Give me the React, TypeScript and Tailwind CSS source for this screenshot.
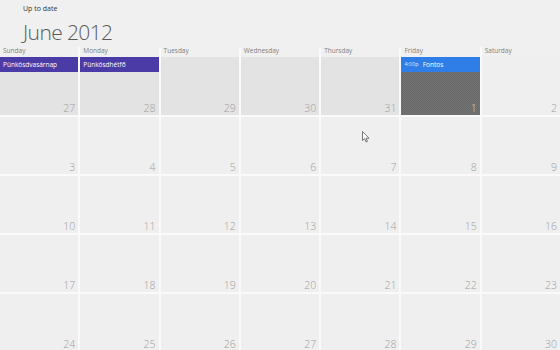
import React from "react";

const days = ["Sunday", "Monday", "Tuesday", "Wednesday", "Thursday", "Friday", "Saturday"];

type Cell = { n: number; prev?: boolean; today?: boolean; event?: { color: string; time?: string; title: string } };

const rows: Cell[][] = [
  [
    { n: 27, prev: true, event: { color: "bg-[#4b3ba6]", title: "Pünkösdvasárnap" } },
    { n: 28, prev: true, event: { color: "bg-[#4b3ba6]", title: "Pünkösdhétfő" } },
    { n: 29, prev: true },
    { n: 30, prev: true },
    { n: 31, prev: true },
    { n: 1, today: true, event: { color: "bg-[#2f7de6]", time: "4:00p", title: "Fontos" } },
    { n: 2 },
  ],
  [3, 4, 5, 6, 7, 8, 9].map((n) => ({ n })),
  [10, 11, 12, 13, 14, 15, 16].map((n) => ({ n })),
  [17, 18, 19, 20, 21, 22, 23].map((n) => ({ n })),
  [24, 25, 26, 27, 28, 29, 30].map((n) => ({ n })),
];

export default function App() {
  return (
    <div
      className="relative w-[560px] h-[350px] overflow-hidden bg-[#f0f0f0]"
      style={{ fontFamily: '"Open Sans", "Noto Sans", sans-serif' }}
    >
      <div className="h-[47px] pl-[23px] pt-[4px]">
        <div className="text-[7px] leading-[9px] text-[#333]">Up to date</div>
        <div className="text-[21px] leading-[24px] mt-[7px] font-light text-[#5a5a5a] tracking-[-0.6px]">
          June 2012
        </div>
      </div>
      <div className="grid grid-cols-7 gap-x-[2px] bg-[#fafafa]">
        {days.map((d) => (
          <div key={d} className="h-[10px] bg-[#f0f0f0] pl-[3px] text-[6.5px] leading-[8px] text-[#808080]">
            {d}
          </div>
        ))}
      </div>
      <div className="grid grid-cols-7 grid-rows-[58px_repeat(4,57px)] gap-[2px] bg-[#fafafa]">
        {rows.flat().map((c, i) => (
          <div
            key={i}
            className={
              "relative flex flex-col " +
              (c.today ? "bg-[#6e6e6e]" : c.prev ? "bg-[#e3e3e3]" : "bg-[#efefef]")
            }
            style={
              c.today
                ? {
                    backgroundImage:
                      "repeating-conic-gradient(#727272 0% 25%, #6a6a6a 0% 50%)",
                    backgroundSize: "2px 2px",
                  }
                : undefined
            }
          >
            {c.event && (
              <div className={"h-[15px] flex items-center px-[3px] text-[6.5px] text-white " + c.event.color}>
                {c.event.time && <span className="mr-[4px] text-[5.5px] opacity-80">{c.event.time}</span>}
                <span>{c.event.title}</span>
              </div>
            )}
            <div
              className={
                "mt-auto text-right pr-[3px] text-[10.5px] leading-[13px] font-light " +
                (c.today ? "text-[#d8d8d8]" : "text-[#a0a0a0]")
              }
            >
              {c.n}
            </div>
          </div>
        ))}
      </div>
      <svg className="absolute left-[362px] top-[131px]" width="8" height="12" viewBox="0 0 8 12">
        <path d="M0.5 0.5 L0.5 9.5 L2.6 7.6 L4.1 11 L5.4 10.4 L4 7.2 L7 7.2 Z" fill="#fff" stroke="#555" strokeWidth="0.8" />
      </svg>
    </div>
  );
}
